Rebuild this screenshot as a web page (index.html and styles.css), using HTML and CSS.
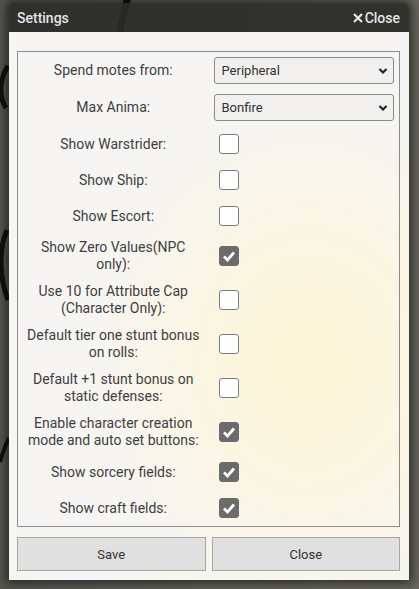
FILE: index.html
```html
<!DOCTYPE html>
<html>
<head>
<meta charset="utf-8">
<link rel="stylesheet" href="styles.css">
</head>
<body>
<svg class="decor" width="419" height="589" viewBox="0 0 419 589">
  <path d="M128 -5 C125 10 122 22 118 40" stroke="#111" stroke-width="7" fill="none"/>
  <path d="M8 66 C0 78 -2 95 6 108" stroke="#111" stroke-width="5" fill="none"/>
  <path d="M7 230 C -2 250 0 280 8 300" stroke="#111" stroke-width="5" fill="none"/>
  <path d="M9 438 C 5 446 2 455 0 462" stroke="#111" stroke-width="4" fill="none"/>
</svg>
<div class="dialog">
  <div class="titlebar">
    <span class="title">Settings</span>
    <span class="close"><svg class="x" width="10" height="10" viewBox="0 0 10 10"><path d="M1 1 L9 9 M9 1 L1 9" stroke="#e8e8e8" stroke-width="2.2"/></svg>Close</span>
  </div>
  <div class="content">
    <div class="panel">
      <div class="row">
        <div class="label">Spend motes from:</div>
        <div class="ctl">
          <div class="selwrap">
            <select><option>Peripheral</option></select>
            <svg class="chev" width="10" height="8" viewBox="0 0 10 8"><path d="M1.5 2 L5 5.5 L8.5 2" stroke="#222" stroke-width="2.2" fill="none"/></svg>
          </div>
        </div>
      </div>
      <div class="row">
        <div class="label">Max Anima:</div>
        <div class="ctl">
          <div class="selwrap">
            <select><option>Bonfire</option></select>
            <svg class="chev" width="10" height="8" viewBox="0 0 10 8"><path d="M1.5 2 L5 5.5 L8.5 2" stroke="#222" stroke-width="2.2" fill="none"/></svg>
          </div>
        </div>
      </div>
      <div class="row">
        <div class="label">Show Warstrider:</div>
        <div class="ctl"><span class="cb"></span></div>
      </div>
      <div class="row">
        <div class="label">Show Ship:</div>
        <div class="ctl"><span class="cb"></span></div>
      </div>
      <div class="row">
        <div class="label">Show Escort:</div>
        <div class="ctl"><span class="cb"></span></div>
      </div>
      <div class="row">
        <div class="label">Show Zero Values(NPC only):</div>
        <div class="ctl"><span class="cb on"><svg width="20" height="20" viewBox="0 0 20 20"><path d="M5 10.5 L8.5 14 L15 6.5" stroke="#fff" stroke-width="2.8" fill="none"/></svg></span></div>
      </div>
      <div class="row">
        <div class="label">Use 10 for Attribute Cap (Character Only):</div>
        <div class="ctl"><span class="cb"></span></div>
      </div>
      <div class="row">
        <div class="label">Default tier one stunt bonus on rolls:</div>
        <div class="ctl"><span class="cb"></span></div>
      </div>
      <div class="row">
        <div class="label">Default +1 stunt bonus on static defenses:</div>
        <div class="ctl"><span class="cb"></span></div>
      </div>
      <div class="row">
        <div class="label">Enable character creation mode and auto set buttons:</div>
        <div class="ctl"><span class="cb on"><svg width="20" height="20" viewBox="0 0 20 20"><path d="M5 10.5 L8.5 14 L15 6.5" stroke="#fff" stroke-width="2.8" fill="none"/></svg></span></div>
      </div>
      <div class="row">
        <div class="label">Show sorcery fields:</div>
        <div class="ctl"><span class="cb on"><svg width="20" height="20" viewBox="0 0 20 20"><path d="M5 10.5 L8.5 14 L15 6.5" stroke="#fff" stroke-width="2.8" fill="none"/></svg></span></div>
      </div>
      <div class="row">
        <div class="label">Show craft fields:</div>
        <div class="ctl"><span class="cb on"><svg width="20" height="20" viewBox="0 0 20 20"><path d="M5 10.5 L8.5 14 L15 6.5" stroke="#fff" stroke-width="2.8" fill="none"/></svg></span></div>
      </div>
    </div>
    <div class="buttons">
      <button class="btn">Save</button>
      <button class="btn">Close</button>
    </div>
  </div>
</div>
</body>
</html>
```

FILE: styles.css
```css
html, body {
  margin: 0;
  padding: 0;
}
body {
  width: 419px;
  height: 589px;
  overflow: hidden;
  background: linear-gradient(90deg, #55554e 0%, #5e5e56 50%, #66665d 100%);
  font-family: Roboto, "Noto Sans", sans-serif;
  position: relative;
}
.decor {
  position: absolute;
  left: 0;
  top: 0;
}
.dialog {
  position: relative;
  margin: 3px 0 0 9px;
  width: 400px;
  border-radius: 6px 6px 0 0;
  box-shadow: 0 0 10px 3px rgba(0, 0, 0, 0.55);
  overflow: hidden;
}
.titlebar {
  height: 29px;
  background: rgba(42, 42, 40, 0.88);
  display: flex;
  align-items: center;
  justify-content: space-between;
  padding: 0 9px 0 8px;
  color: #e4e4e4;
  font-size: 14px;
  font-weight: 500;
}
.close {
  display: flex;
  align-items: center;
  gap: 2px;
  font-size: 14px;
}
.content {
  background: radial-gradient(ellipse 260px 300px at 300px 330px, #fdf6d6 0%, #fbf6e4 45%, #f7f5f1 80%, #f6f5f3 100%);
  padding: 19px 9px 9px 8px;
}
.panel {
  border: 1px solid #8c8c8c;
}
.row {
  display: grid;
  grid-template-columns: 1fr 1fr;
  align-items: center;
  padding: 5px 0;
}
.label {
  text-align: center;
  color: #3e3e3e;
  font-size: 14px;
  line-height: 17px;
  padding: 0 6px;
}
.ctl {
  display: flex;
  align-items: center;
}
.selwrap {
  position: relative;
  margin: 0 5px;
  flex: 1;
}
select {
  appearance: none;
  -webkit-appearance: none;
  width: 100%;
  height: 27px;
  border: 1px solid #8a8a8a;
  border-radius: 3px;
  background: #f1f0ee;
  font-family: Roboto, "Noto Sans", sans-serif;
  font-size: 13px;
  color: #333;
  padding: 0 7px;
  display: block;
}
.chev {
  position: absolute;
  right: 6px;
  top: 10px;
}
.cb {
  display: block;
  width: 18px;
  height: 18px;
  border: 1px solid #7a7a7a;
  border-radius: 3px;
  background: #fff;
  margin: 3px 0 3px 10px;
  position: relative;
}
.cb.on {
  background: #6b6b6b;
  border-color: #6b6b6b;
}
.cb svg {
  position: absolute;
  left: -1px;
  top: -1px;
}
.buttons {
  display: grid;
  grid-template-columns: 1fr 1fr;
  gap: 6px;
  margin-top: 10px;
}
.btn {
  height: 34px;
  border: 1px solid #a6a89a;
  background: #e0e0e0;
  font-family: Roboto, "Noto Sans", sans-serif;
  font-size: 13px;
  color: #333;
  border-radius: 0;
}
```
